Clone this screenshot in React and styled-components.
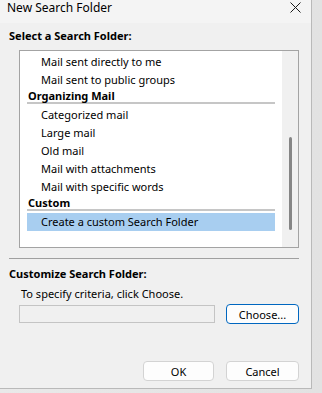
import React from "react";
import styled, { createGlobalStyle } from "styled-components";

const GlobalStyle = createGlobalStyle`
  html, body {
    margin: 0;
    padding: 0;
    background: #e6e6e6;
  }
  * {
    box-sizing: border-box;
  }
`;

const Page = styled.div`
  width: 322px;
  height: 393px;
  background: linear-gradient(90deg, #e9e9e9, #e2e2e2);
  font-family: "Noto Sans", "Open Sans", sans-serif;
  font-size: 11px;
  color: #000;
`;

const Dialog = styled.div`
  width: 312px;
  height: 389px;
  display: flex;
  flex-direction: column;
  background: #f0f0f0;
  border-right: 1px solid #b9b9b9;
  border-bottom: 1px solid #b9b9b9;
`;

const TitleBar = styled.div`
  height: 23px;
  display: flex;
  justify-content: space-between;
  align-items: flex-start;
  padding: 0 10px 0 7px;
  background: #f4f4f4;
`;

const Title = styled.div`
  font-size: 12px;
  line-height: 16px;
`;

const CloseIcon = styled.svg`
  margin-top: 2px;
`;

const Body = styled.div`
  flex: 1;
  display: flex;
  flex-direction: column;
  padding: 0 12px 7px 9px;
`;

const SectionLabel = styled.div`
  font-weight: bold;
  line-height: 16px;
  margin-top: ${(p) => p.top}px;
`;

const ListBox = styled.div`
  margin: 6px 0 0 10px;
  height: 198px;
  display: flex;
  background: #fff;
  border: 1px solid #a3a3a3;
`;

const ListContent = styled.div`
  flex: 1;
  padding: 2px 7px;
  overflow: hidden;
`;

const Row = styled.div`
  height: 18px;
  line-height: 18px;
  padding-left: 14px;
  white-space: nowrap;
  background: ${(p) => (p.selected ? "#a8cef0" : "transparent")};
`;

const GroupHeader = styled.div`
  height: 15px;
  line-height: 13px;
  padding-left: 1px;
  font-weight: bold;
  border-bottom: 2px solid #c6c6c6;
  margin-bottom: 2px;
`;

const ScrollTrack = styled.div`
  width: 16px;
  background: #f0f0f0;
  display: flex;
  flex-direction: column;
`;

const ScrollThumb = styled.div`
  width: 3px;
  height: 93px;
  margin: 86px 0 0 7px;
  border-radius: 2px;
  background: #858585;
`;

const Divider = styled.div`
  height: 1px;
  margin-top: 10px;
  background: #a0a0a0;
`;

const Hint = styled.div`
  line-height: 16px;
  margin: 4px 0 0 12px;
`;

const CriteriaRow = styled.div`
  display: flex;
  align-items: center;
  gap: 11px;
  margin: 2px 0 0 10px;
  height: 20px;
`;

const CriteriaField = styled.div`
  width: 196px;
  height: 18px;
  background: #f0f0f0;
  border: 1px solid #c4c4c4;
`;

const Button = styled.button`
  width: ${(p) => p.w}px;
  height: 20px;
  padding: 0;
  font-family: inherit;
  font-size: 11px;
  color: #000;
  background: #fdfdfd;
  border: 1px solid ${(p) => (p.primary ? "#0067c0" : "#d3d3d3")};
  border-radius: 4px;
`;

const Footer = styled.div`
  margin-top: auto;
  display: flex;
  justify-content: flex-end;
  gap: 12px;
`;

const groups = [
  { items: ["Mail sent directly to me", "Mail sent to public groups"] },
  {
    title: "Organizing Mail",
    items: [
      "Categorized mail",
      "Large mail",
      "Old mail",
      "Mail with attachments",
      "Mail with specific words",
    ],
  },
  { title: "Custom", items: ["Create a custom Search Folder"] },
];

export default function App() {
  return (
    <>
      <GlobalStyle />
      <Page>
        <Dialog>
          <TitleBar>
            <Title>New Search Folder</Title>
            <CloseIcon width="11" height="11" viewBox="0 0 11 11">
              <path d="M0.5 0.5 L10.5 10.5 M10.5 0.5 L0.5 10.5" stroke="#1a1a1a" strokeWidth="1" />
            </CloseIcon>
          </TitleBar>
          <Body>
            <SectionLabel top={5}>Select a Search Folder:</SectionLabel>
            <ListBox>
              <ListContent>
                {groups.map((g, i) => (
                  <React.Fragment key={i}>
                    {g.title && <GroupHeader>{g.title}</GroupHeader>}
                    {g.items.map((it) => (
                      <Row key={it} selected={it === "Create a custom Search Folder"}>
                        {it}
                      </Row>
                    ))}
                  </React.Fragment>
                ))}
              </ListContent>
              <ScrollTrack>
                <ScrollThumb />
              </ScrollTrack>
            </ListBox>
            <Divider />
            <SectionLabel top={7}>Customize Search Folder:</SectionLabel>
            <Hint>To specify criteria, click Choose.</Hint>
            <CriteriaRow>
              <CriteriaField />
              <Button primary w={73}>Choose...</Button>
            </CriteriaRow>
            <Footer>
              <Button w={71}>OK</Button>
              <Button w={73}>Cancel</Button>
            </Footer>
          </Body>
        </Dialog>
      </Page>
    </>
  );
}
